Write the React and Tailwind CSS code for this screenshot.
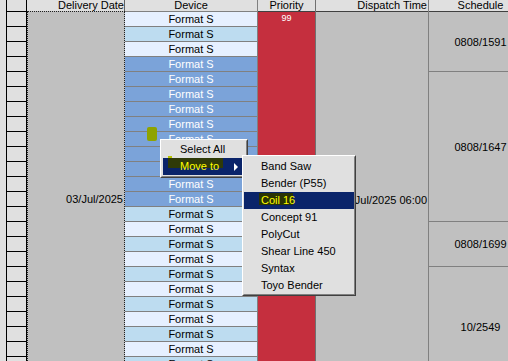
import React from 'react';

const ROWS = Array.from({ length: 25 }, (_, i) => i);

// rows 3..12 are selected in the grid
const deviceCell = (i) => {
  if (i >= 3 && i <= 12) return 'bg-[#7ba3d9] text-white';
  return i % 2 ? 'bg-[#bddcf0] text-black' : 'bg-[#e6f0ff] text-black';
};

const MACHINES = ['Band Saw', 'Bender (P55)', 'Coil 16', 'Concept 91', 'PolyCut', 'Shear Line 450', 'Syntax', 'Toyo Bender'];

const SCHEDULES = [
  { id: '0808/1591', h: 'h-[60px] border-b' },
  { id: '0808/1647', h: 'h-[150px] border-b' },
  { id: '0808/1699', h: 'h-[45px] border-b' },
  { id: '10/2549', h: 'h-[120px]' },
];

const Header = ({ children, className = '' }) => (
  <div className={`h-[12px] shrink-0 overflow-hidden border-b bg-[#e0e0e0] leading-[10px] whitespace-nowrap ${className}`}>
    {children}
  </div>
);

export default function App() {
  return (
    <div className="relative flex h-[361px] w-[508px] overflow-hidden bg-[#c0c0c0] font-['Liberation_Sans',Arial,sans-serif] text-[11px] text-black">
      {/* left frame strip */}
      <div className="w-[6px] shrink-0 bg-[#e0e0e0]" />

      {/* row headers */}
      <div className="flex w-[21px] shrink-0 flex-col border-x border-black bg-[#e0e0e0]">
        <div className="h-[12px] shrink-0 border-b border-black" />
        {ROWS.map((i) => (
          <div key={i} className="h-[15px] shrink-0 border-b border-black" />
        ))}
      </div>

      {/* Delivery Date (merged) */}
      <div className="flex w-[98px] shrink-0 flex-col">
        <div className="h-[11px] shrink-0 overflow-hidden border-r border-[#606060] bg-[#e0e0e0] text-right leading-[10px] whitespace-nowrap">
          Delivery Date
        </div>
        <div className="flex h-[376px] shrink-0 items-center justify-end border border-dotted border-[#202020] pr-[1px] leading-[14px]">
          03/Jul/2025
        </div>
      </div>

      {/* Device */}
      <div className="flex w-[133px] shrink-0 flex-col border-r border-[#808080]">
        <Header className="border-[#808080] text-center">Device</Header>
        {ROWS.map((i) => (
          <div key={i} className={`h-[15px] shrink-0 border-b border-[#808080] text-center leading-[14px] ${deviceCell(i)}`}>
            Format S
          </div>
        ))}
      </div>

      {/* Priority */}
      <div className="flex w-[58px] shrink-0 flex-col border-r border-[#707070]">
        <Header className="border-[#404040] text-center">Priority</Header>
        <div className="flex-1 bg-[#c52f3e]">
          <div className="h-[14px] text-center text-[9px] leading-[13px] text-white">99</div>
        </div>
      </div>

      {/* Dispatch Time (merged) */}
      <div className="flex w-[113px] shrink-0 flex-col border-r border-[#808080]">
        <Header className="border-[#404040] pr-[1px] text-right">Dispatch Time</Header>
        <div className="flex h-[375px] shrink-0 items-center justify-end pr-[1px] leading-[14px] whitespace-nowrap">
          03/Jul/2025 06:00
        </div>
      </div>

      {/* Schedule */}
      <div className="flex w-[103px] shrink-0 flex-col">
        <Header className="border-[#404040] text-center">Schedule</Header>
        {SCHEDULES.map((s) => (
          <div key={s.id} className={`flex shrink-0 items-center justify-center border-[#808080] leading-[14px] ${s.h}`}>
            {s.id}
          </div>
        ))}
      </div>

      {/* stray cursor blob */}
      <div className="absolute left-[147px] top-[127px] h-[14px] w-[10px] rounded-[2px] bg-[#8ea300]" />

      {/* context menu */}
      <div className="absolute left-[160px] top-[139px] w-[88px] border border-b-[#404040] border-l-white border-r-[#404040] border-t-white bg-[#e0e0e0]">
        <div className="border border-b-[#808080] border-l-[#e0e0e0] border-r-[#808080] border-t-[#e0e0e0] px-[1px] pb-[1px]">
          <div className="h-[17px] pl-[17px] leading-[17px]">Select All</div>
          <div className="relative flex h-[17px] items-center bg-[#0a246a] pl-[17px] text-[#ffff00]">
            <div className="absolute -top-[2px] left-[5px] h-[2px] w-[4px] bg-[#b8c400]" />
            <div className="absolute left-[5px] top-0 h-[10px] w-[55px] bg-[#2f3a08]" />
            <span className="relative leading-[17px]">Move to</span>
            <span className="ml-auto mr-[7px] h-0 w-0 border-y-[4px] border-l-[4px] border-y-transparent border-l-white" />
          </div>
        </div>
      </div>

      {/* submenu */}
      <div className="absolute left-[242px] top-[155px] w-[114px] border border-b-[#404040] border-l-white border-r-[#404040] border-t-white bg-[#e0e0e0]">
        <div className="border border-b-[#808080] border-l-[#e0e0e0] border-r-[#808080] border-t-[#e0e0e0] pt-[1px]">
          {MACHINES.map((m) =>
            m === 'Coil 16' ? (
              <div key={m} className="relative h-[17px] bg-[#0a246a] pl-[17px] leading-[17px] text-[#ffff00]">
                <div className="absolute left-[15px] top-[1px] h-[12px] w-[34px] bg-[#2a3305]" />
                <span className="relative">{m}</span>
              </div>
            ) : (
              <div key={m} className="h-[17px] pl-[17px] leading-[17px]">
                {m}
              </div>
            )
          )}
        </div>
      </div>
    </div>
  );
}
